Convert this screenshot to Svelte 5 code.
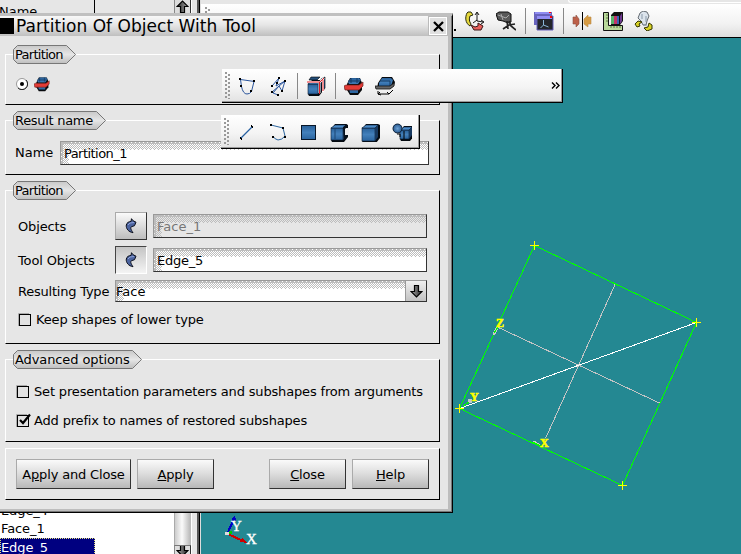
<script>
  const mainTools = ['rotate', 'zoomTool', '|', 'windows', '|', 'mirror', 'ruler', 'light'];
  const opTools = ['polygon', 'sketch', '|', 'explode', '|', 'partition', 'archimede'];
  const buildTools = ['edge', 'wire', 'face', 'shell', 'solid', 'compound'];
  let addPrefix = $state(true);
  let setParams = $state(false);
  let keepShapes = $state(false);

  // [row, gray columns] of a 4 px wide fading dither
  const dither = [
    [0, [0, 1, 3]], [1, [0, 1, 2, 3]], [2, [0, 2]], [3, [1, 3]],
    [4, [0, 2]], [5, [1, 3]], [6, [0, 2]], [7, [1]]
  ];
</script>

<svelte:head><title>Partition Of Object With Tool</title></svelte:head>

{#snippet cube(x, y, s)}
  <path d="M{x + 1} {y + 4}l3-4h{s - 3}l2 1v{s - 2}l-4 5h-{s - 2}l-1-2z" fill="#050a10" />
  <rect {x} y={y + 4} width={s - 2} height={s - 2} fill="url(#face)" stroke="#0c1d33" stroke-width=".6" />
  <path d="M{x} {y + 4}l4-3h{s - 3}l-3 3z" fill="#4b8bc9" stroke="#0c1d33" stroke-width=".6" />
  <path d="M{x + s - 2} {y + 4}l3-3v{s - 3}l-3 4z" fill="#173960" />
{/snippet}

{#snippet icon(name)}
  <svg class="icon" viewBox="0 0 20 20">
    {#if name === 'polygon'}
      <path d="M3.5 3.5L17.500 5.500M3.500 3.500L4.500 10.500Q6 18 10 18Q13 18 14.500 15.500L17 5.500" fill="none" stroke="#2b559c" />
      <path d="M2 2h2v2H2zM16 4h2v2h-2zM3 9h2v2H3zM13 14h2v2h-2z" />
    {:else if name === 'sketch'}
      <path d="M4 10L11 2L8 10L17 5L14 15L11 10L5 17L10 19M4 16L17 5" fill="none" stroke="#2b559c" />
      <path d="M3 9h2v2H3zM10 1h2v2h-2zM8 6h2v2H8zM16 4h2v2h-2zM13 14h2v2h-2zM3 15h2v2H3zM9 18h2v2H9z" />
    {:else if name === 'explode'}
      {@render cube(2, 4, 12)}
      <path d="M5 1h9l-3 3H3zM15 3l4-2v11l-3 4z" fill="#234f7b" stroke="#000" stroke-width=".6" />
      <path d="M1 6h13M14 6l4-4M13.500 6v11M17 4v12" stroke="#fff" stroke-width="2" />
      <path d="M1 6h13l4-4M13.500 6v12M17 4v11" fill="none" stroke="#e21f26" />
    {:else if name === 'partition'}
      <path d="M3 8l3-6h10l2 5v7l-4 5H6l-3-5z" fill="#080a0d" />
      <path d="M4 6l3-4h8l2 2-3 4H5zM5 12h9v5H6z" fill="url(#face)" />
      <path d="M4 5h12M7 2v5M13 2v5" stroke="#153b65" />
      <path d="M0 10l2-1h13l4-3v4l-4 4H1z" fill="#e33b36" stroke="#65211f" stroke-width=".7" />
    {:else if name === 'archimede'}
      <path d="M3 7l4-6h10l3 5-1 4-4 3H2z" fill="#080a0d" />
      <path d="M4 7l3-5h9l2 2-2 6H4z" fill="url(#face)" />
      <path d="M5 5h10M15 5v5" stroke="#173c65" />
      <path d="M0 10h15l4-3v3l-4 3H1z" fill="#666" stroke="#151515" stroke-width=".8" />
      <path d="M3 15v3h11l4-4M3 18l2-2M3 18l3 1M14 18l-2-2" fill="none" stroke="#000" />
    {:else if name === 'edge'}
      <path d="M4 16L15 5" stroke="#2760a0" stroke-width="1.300" /><path d="M3 15h1v1h1v2H4v-1H3zM14 3h1v1h1v2h-1V5h-1z" />
    {:else if name === 'wire'}
      <path d="M3 3L15 6L17 14Q14 18 10 18Q6 17 5 14" fill="none" stroke="#2b659e" />
      <path d="M2 2h2v2H2zM14 5h2v2h-2zM16 14h2v2h-2zM4 14h2v2H4z" />
    {:else if name === 'face'}
      <rect x="2.500" y="3.500" width="14" height="14" fill="url(#face)" stroke="#081627" />
    {:else if name === 'shell'}
      {@render cube(1, 2, 14)}
      <path d="M14 6h5v7h-5z" fill="#efefef" /><path d="M13 5l4-3v3l-2 2v6l3 1-4 5z" fill="#06101c" /><path d="M5 7v10" stroke="#1c4673" />
    {:else if name === 'solid'}
      {@render cube(1, 2, 15)}
    {:else if name === 'compound'}
      {@render cube(8, 4, 11)}
      <circle cx="5.500" cy="6.500" r="4.500" fill="url(#ball)" stroke="#0a1e35" />
      <path d="M5 12h3v3M12 9v8" stroke="#000" fill="none" />
    {:else if name === 'rotate'}
      <path d="M5 15C0 12 0 6 2 2L3 1h3l2 3-3 1c-1 3-1 5 1 8z" fill="#e5d83e" stroke="#282b0c" />
      <path d="M6 14l4 2 3-1V12l5 3-2 4H9z" fill="#e8605c" stroke="#3a1717" />
      <path d="M12 2v8l6 1M12 9l-4 3M10 4l2-3 2 3M16 9l3 2-3 2" fill="none" stroke="#000" stroke-width=".9" />
    {:else if name === 'zoomTool'}
      <path d="M0 3l3-2h9l3 2v8l-3 1-5-2-5-1z" fill="#595959" stroke="#111" />
      <path d="M2 4l8 3 3-3M5 3l2 6" stroke="#aaa" fill="none" />
      <path d="M11 10l1 8M13 10l2 5 5 4M7 18l6-4 6-1" stroke="#222" fill="none" stroke-width="1.700" />
    {:else if name === 'windows'}
      <path d="M0 1h18v13H0z" fill="#6863bd" /><path d="M1 1h16v2H1z" fill="#8f8cf1" />
      <path d="M3 5h16v14H3z" fill="#24262b" stroke="#6561bc" /><path d="M3 5h15v3H3z" fill="#928df4" />
      <path d="M15 1h2v1h-2zM16 5h2v2h-2z" fill="#f00" />
      <path d="M9.500 9v5l5 2M9.500 14l-3 3" stroke="#8ab7d8" fill="none" />
    {:else if name === 'mirror'}
      <path d="M10.500 1v18" stroke="#000" /><path d="M1 6h3V4l3 4v5l-3 3v-3H1z" fill="#bd6049" stroke="#895344" stroke-width=".6" />
      <path d="M19 6h-3V4l-4 4v5l4 3v-3h3z" fill="#d69b43" stroke="#b88a46" stroke-width=".6" />
    {:else if name === 'ruler'}
      <path d="M.5 1.500h5v13h14v5H.5z" fill="#b9d99b" stroke="#111" />
      <path d="M3 4h2M3 7h2M3 10h2M8 15v2M11 15v2M14 15v2M17 15v2" stroke="#5e7a43" />
      <path d="M8 4l3-3h9v9l-3 4H8z" fill="#111" /><path d="M8 5h3v8H8z" fill="#58b46b" /><path d="M11 5h3v8h-3z" fill="#c43468" /><path d="M14 5h2v8h-2z" fill="#3a63b5" /><path d="M17 5l2-3v8l-2 3z" fill="#703b90" />
    {:else if name === 'light'}
      <path d="M6 2l3-2 4 1 2 4-2 5-1 4H9L7 10 4 7z" fill="#dce4ec" stroke="#424a52" stroke-width=".8" />
      <path d="M8 3v5M12 5v6M9 14h4" stroke="#8999a9" />
      <path d="M1 13l3-3 4 1-3 2 1 2-3 1zM10 17l4-1 1-4 3 2v4l-5 2z" fill="#d8d126" stroke="#333600" />
    {/if}
  </svg>
{/snippet}

{#snippet tools(list)}
  {#each list as t}
    {#if t === '|'}<span class="sep"></span>{:else}<span class="slot">{@render icon(t)}</span>{/if}
  {/each}
{/snippet}

{#snippet grip()}
  <svg class="grip" width="6" height="27" viewBox="0 0 6 27"><rect width="6" height="27" fill="url(#gripdots)" /></svg>
{/snippet}

{#snippet legend(text, w, track)}
  <div class="legend" style:width="{w}px" style:letter-spacing="{track}px">
    <svg width={w} height="19" viewBox="0 0 {w} 19">
      <path d="M.5 4.500L4.500.500H{w - 9.5}L{w - 0.5} 9.500L{w - 9.5} 18.500H4.500L.5 14.500Z" fill="url(#plate)" stroke="#777" />
    </svg>
    <span>{text}</span>
  </div>
{/snippet}

{#snippet shade()}
  <svg class="shade" width="100%" height="100%" shape-rendering="crispEdges">
    <rect width="100%" height="8" fill="url(#dither)" />
    <g transform="matrix(0 1 1 0 0 0)"><rect width="24" height="8" fill="url(#dither)" /></g>
  </svg>
{/snippet}

{#snippet pick(down)}
  <button class="pick" class:down aria-label="Select">
    <svg width="12" height="16" viewBox="0 0 12 16">
      <path d="M6.500 .7l1.500 2 3 1.500-1.500 3.500-3 1c-1.500 1-.500 3 1.500 6C3.500 14 .8 10.500 1.300 7c.5-2.500 2.700-3.500 4.700-3.500z" fill="#4b639f" stroke="#090d18" />
      <path d="M3 7l2-2 4-.5" fill="none" stroke="#8fa2d8" />
    </svg>
  </button>
{/snippet}

{#snippet arrow(flip)}
  <svg class:flip width="13" height="13" viewBox="0 0 13 13"><path d="M4.500.5h4v6h3.500L6.500 12L1 6.500h3.500z" fill="url(#arr)" stroke="#000" stroke-width="1.200" /></svg>
{/snippet}

{#snippet box(on)}
  <svg class="box" width="16" height="15" viewBox="0 0 16 15">
    <path d="M.5 14V1.500H11" fill="none" stroke="#aaa" /><rect x="1.500" y="2.500" width="11" height="11" fill="#e2e2e2" stroke="#000" />
    {#if on}<path d="M4 7l3 3L14 1.500" fill="none" stroke="#000" stroke-width="2.200" />{/if}
  </svg>
{/snippet}

<svg class="defs" width="0" height="0">
  <defs>
    <linearGradient id="face" x1="0" y1="0" x2="0" y2="1"><stop stop-color="#286099" /><stop offset=".5" stop-color="#4380bb" /><stop offset="1" stop-color="#2a649f" /></linearGradient>
    <radialGradient id="ball"><stop stop-color="#6aa0d4" /><stop offset="1" stop-color="#2a5a90" /></radialGradient>
    <linearGradient id="plate" x1="0" y1="0" x2="0" y2="1"><stop stop-color="#c8c8c8" /><stop offset=".5" stop-color="#e6e6e6" /><stop offset="1" stop-color="#bebebe" /></linearGradient>
    <linearGradient id="arr" x1="0" x2="1"><stop stop-color="#aaa" /><stop offset="1" stop-color="#222" /></linearGradient>
    <pattern id="dither" width="4" height="8" patternUnits="userSpaceOnUse">
      {#each dither as [y, cols]}{#each cols as x}<rect {x} {y} width="1" height="1" fill="#bcbcbc" />{/each}{/each}
    </pattern>
    <pattern id="gripdots" width="6" height="4" patternUnits="userSpaceOnUse"><path d="M0 0h2v2H0zM3 2h2v2H3z" fill="#999" /></pattern>
  </defs>
</svg>

<main>
  <aside>
    <div class="tree">
      <div class="head"><span>Name</span></div>
      <div class="items"><p>Edge_4</p><p>Face_1</p><p class="sel">Edge_5</p></div>
    </div>
    <div class="scroll"><span class="sb">{@render arrow(true)}</span><span class="sb low">{@render arrow(false)}</span></div>
    <div class="split"></div>
  </aside>
  <section class="work">
    <div class="strip"><i></i></div>
    <div class="maintools">{@render grip()}<svg class="cut" width="4" height="22" viewBox="0 0 4 22"><path d="M0 3h1v10H0zM2 19h2v2H2z" /></svg>{@render tools(mainTools)}</div>
    <svg class="scene" width="540" height="516" viewBox="201 38 540 516" shape-rendering="crispEdges">
      <g fill="none">
        <path d="M615.500 283.500L545.500 438.500M498.500 327.500L660.500 403.500" stroke="#c4c4c4" />
        <path d="M459.500 408.500L534.500 245.500L696.500 322.500L622.500 485.500Z" stroke="#0f0" />
        <path d="M459.500 408.500L696.500 322.500" stroke="#fff" />
        <path d="M530 245.500h9M534.500 241v9M692 322.500h9M696.500 318v9M618 485.500h9M622.500 481v9M455 408.500h9M459.500 404v9" stroke="#ff0" />
      </g>
      <path d="M493 333l3-6 2 2-3 6h-2zM468 399h4v4h-4zM532 441h3l6 4h-3z" fill="#c8c8c8" />
      <path d="M494 333l4-6M463 406l6-4M533 442l8 4" stroke="#0f0" />
      <g class="axis"><text x="496" y="327">Z</text><text x="470" y="401">Y</text><text x="540" y="447">X</text></g>
      <path d="M227.500 533L234 519" stroke="#0000c8" stroke-width="2" /><path d="M235 515l1 6-5-2z" fill="#0000c8" />
      <path d="M228 534l15 7" stroke="#d00000" stroke-width="2" /><path d="M247 543l-7-1 2-4z" fill="#c00" />
      <path d="M229 531h3v3h-3z" fill="#0c0" /><path d="M225 532h4v3h-4z" fill="#ddd" />
      <g class="triad"><text x="231" y="531">Y</text><text x="246" y="544">X</text></g>
    </svg>
  </section>
</main>

<div class="dialog">
  <header><b class="sys"></b><h1>Partition Of Object With Tool</h1>
    <button class="x" aria-label="Close window"><svg width="11" height="11" viewBox="0 0 11 11"><path d="M1 1l9 9M10 1l-9 9" stroke="#000" stroke-width="2.300" /></svg></button>
  </header>
  <div class="body">
    <div class="group g1">{@render legend('Partition', 63, -0.7)}
      <div class="radio"><svg width="12" height="12" viewBox="0 0 12 12"><circle cx="6" cy="6" r="5.500" fill="#fff" stroke="#999" /><path d="M10 2a5.500 5.500 0 0 1-8 8" fill="none" stroke="#222" /><circle cx="6" cy="6" r="2" /></svg><span class="small">{@render icon('partition')}</span></div>
    </div>
    <div class="group g2">{@render legend('Result name', 93, -0.3)}
      <div class="name"><label for="n">Name</label><div class="field" id="n">{@render shade()}<span class="t1">Partition_1</span></div></div>
    </div>
    <div class="group g3">{@render legend('Partition', 63, -0.7)}
      <div class="row r1"><span class="lab">Objects</span>{@render pick(false)}<div class="field off">{@render shade()}<span>Face_1</span></div></div>
      <div class="row r2"><span class="lab">Tool Objects</span>{@render pick(true)}<div class="field">{@render shade()}<span class="t2">Edge_5</span></div></div>
      <div class="row r3"><span class="lab type">Resulting Type</span><div class="field combo">{@render shade()}<span>Face</span><i class="drop">{@render arrow(false)}</i></div></div>
      <button class="check c1" onclick={() => (keepShapes = !keepShapes)}>{@render box(keepShapes)}<span>Keep shapes of lower type</span></button>
    </div>
    <div class="group g4">{@render legend('Advanced options', 129, -0.1)}
      <button class="check c2" onclick={() => (setParams = !setParams)}>{@render box(setParams)}<span>Set presentation parameters and subshapes from arguments</span></button>
      <button class="check c3" onclick={() => (addPrefix = !addPrefix)}>{@render box(addPrefix)}<span>Add prefix to names of restored subshapes</span></button>
    </div>
    <div class="group g5">
      <button class="btn wide">A<u>p</u>ply and Close</button><button class="btn"><u>A</u>pply</button><em></em><button class="btn"><u>C</u>lose</button><button class="btn"><u>H</u>elp</button>
    </div>
  </div>
</div>

<div class="float ops">{@render grip()}{@render tools(opTools)}<svg class="more" width="9" height="7" viewBox="0 0 9 7"><path d="M1 .5l3 3-3 3M5 .5l3 3-3 3" fill="none" stroke="#000" stroke-width="1.400" /></svg></div>
<div class="float build">{@render grip()}{@render tools(buildTools)}</div>

<style>
  :global(body) { margin: 0; overflow: hidden; }
  * { box-sizing: border-box; }
  .defs { position: absolute; }
  main, .dialog, .float { font: 13px/16px "DejaVu Sans", sans-serif; color: #000; }
  button { font: inherit; color: inherit; padding: 0; margin: 0; border: 0; background: none; }
  svg { display: block; flex: none; }
  main { display: flex; width: 741px; height: 554px; background: #e6e6e6; }
  aside { display: flex; width: 201px; background: #fff; }
  .tree { width: 174px; display: flex; flex-direction: column; justify-content: space-between; overflow: hidden; background: linear-gradient(#e6e6e6 13px, #fff 13px); }
  .head { width: 95px; height: 13px; border-right: 1px solid #000; }
  .head span { display: block; padding-top: 4px; margin-left: -1px; }
  .items { height: 50px; }
  .items p { margin: 0; height: 18px; line-height: 18px; padding-left: 1px; letter-spacing: -.1px; }
  .items p:first-child { margin-top: -2px; }
  .items .sel { width: 95px; height: 19px; background: #000080; color: #fff; outline: 1px dotted #e5e07d; outline-offset: -1px; line-height: 20px; }
  .scroll { width: 17px; display: flex; flex-direction: column; justify-content: space-between; background: linear-gradient(90deg, #aaa 1px, #ccc 1px, #fafafa 8px, #bbb 16px); }
  .sb { height: 13px; display: flex; justify-content: center; background: #ddd; border-right: 1px solid #333; border-left: 1px solid #888; overflow: hidden; }
  .low { height: 9px; border-top: 1px solid #777; padding-top: 2px; }
  .low svg { margin-top: -4px; }
  .flip { transform: rotate(180deg); }
  .split { width: 10px; background: linear-gradient(90deg, #fff 1px, #e6e6e6 1px, #e6e6e6 6px, #555 6px, #555 8px, #000 8px, #000 9px, #ddd 9px); }
  .work { width: 540px; }
  .strip { height: 4px; display: flex; justify-content: flex-end; background: #e6e6e6; }
  .strip i { width: 173px; height: 3px; border-bottom: 1px solid #fff; border-left: 1px solid #fff; border-radius: 0 0 0 3px; }
  .maintools { height: 34px; display: flex; align-items: center; padding-left: 4px; border-bottom: 1px solid #000; background: linear-gradient(#fff, #f2f2f2 60%, #dedede); }
  .cut { margin-left: 241px; margin-right: 3px; }
  .maintools .grip { margin-right: 0; }
  .scene { background: #248892; }
  .axis { font: bold 12px "Liberation Serif", serif; fill: #ff0; stroke: #ff0; stroke-width: .6px; }
  .triad { font: 15px "Liberation Serif", serif; fill: #fff; stroke: #fff; stroke-width: .3px; }
  .slot { width: 31px; display: flex; justify-content: center; flex: none; }
  .icon { width: 20px; height: 20px; }
  .sep { width: 1px; height: 26px; margin: 0 2px 0 4px; background: #888; flex: none; }
  .grip { margin-right: 1px; }
  .ops .grip { margin-right: 0; }

  .dialog { position: absolute; left: 0; top: 13px; width: 453px; height: 500px; display: flex; flex-direction: column; background: #e6e6e6; border-top: 3px solid #c0c0c0; border-right: 1px solid #000; border-bottom: 1px solid #000; box-shadow: inset -1px -1px #777, inset -4px -3px #bdbdbd; }
  header { height: 20px; margin-right: 4px; display: flex; align-items: center; background: linear-gradient(#f8f8f8, #e6e6e6 45%, #bfbfbf); }
  .sys { width: 14px; height: 16px; background: #000; }
  h1 { flex: 1; margin: 0 0 0 2px; font: 17px/20px "DejaVu Sans", sans-serif; letter-spacing: .04px; white-space: nowrap; }
  .x { width: 18px; height: 18px; display: flex; align-items: center; justify-content: center; border: 1px solid #fff; outline: 1px solid #bbb; background: #e0e0e0; margin-right: 1px; }
  .body { padding: 18px 0 0 5px; display: flex; flex-direction: column; }
  .group { width: 435px; border: 1px solid #000; border-top-color: #fff; border-left-color: #fff; }
  .g1 { height: 51px; margin-bottom: 15px; }
  .g2 { height: 55px; margin-bottom: 15px; }
  .g3 { height: 154px; margin-bottom: 15px; }
  .g4 { height: 83px; margin-bottom: 6px; }
  .g5 { height: 52px; display: flex; gap: 6px; padding: 10px 10px 0; letter-spacing: -.16px; }
  .g5 em { flex: 1; }
  .legend { display: grid; height: 19px; margin: -10px 0 0 7px; white-space: nowrap; }
  .legend svg, .legend span { grid-area: 1 / 1; }
  .legend span { padding-left: 2px; line-height: 19px; }
  .radio { display: flex; align-items: center; gap: 6px; padding: 12px 0 0 10px; }
  .small .icon { width: 16px; height: 16px; }
  .name { display: flex; align-items: center; padding: 10px 10px 0 9px; }
  .name label { width: 45px; line-height: 24px; padding-top: 1px; }
  .t1 { letter-spacing: -.55px; }
  .t2 { letter-spacing: -.25px; }
  .row { display: flex; align-items: center; padding-left: 12px; }
  .lab { width: 97px; white-space: nowrap; letter-spacing: -.15px; padding-top: 2px; }
  .type { letter-spacing: -.22px; }
  .r1 { margin-top: 11px; height: 29px; }
  .r2 { margin-top: 5px; height: 29px; }
  .r3 { margin-top: 6px; height: 22px; }
  .field { flex: 1; display: grid; height: 24px; background: #fff; border: 1px solid #333; border-top-color: #999; border-left-color: #999; }
  .row .field { margin-right: 12px; }
  .field > span, .shade { grid-area: 1 / 1; min-width: 0; min-height: 0; }
  .field > span { padding-left: 3px; line-height: 23px; }
  .shade { height: 22px; overflow: hidden; }
  .off { background: #e6e6e6; color: #777; }
  .row .combo { height: 22px; }
  .combo .shade { height: 20px; }
  .combo > span { padding-left: 0; line-height: 21px; }
  .drop { grid-area: 1 / 1; justify-self: end; width: 21px; height: 20px; display: flex; align-items: center; justify-content: center; border-left: 1px solid #999; background: linear-gradient(#f0f0f0, #c2c2c2); }
  .pick { width: 32px; height: 28px; margin-right: 6px; display: flex; align-items: center; justify-content: center; border: 1px solid #333; border-top-color: #aaa; border-left-color: #aaa; background: linear-gradient(#fafafa, #bdbdbd); }
  .down { border-color: #444 #fff #fff #444; background: linear-gradient(#c4c4c4, #f4f4f4); }
  .check { display: flex; align-items: center; height: 16px; text-align: left; white-space: nowrap; }
  .check span { padding-top: 2px; }
  .box { margin-right: 2px; }
  .c1 { margin: 9px 0 0 12px; letter-spacing: -.2px; }
  .c2 { margin: 14px 0 0 10px; letter-spacing: -.165px; }
  .c3 { margin: 13px 0 0 10px; letter-spacing: -.13px; }
  .btn { width: 77px; height: 30px; padding-top: 1px; letter-spacing: inherit; border: 1px solid #333; border-top-color: #aaa; border-left-color: #aaa; background: linear-gradient(#fafafa, #dcdcdc 50%, #b8b8b8); white-space: nowrap; }
  .check { letter-spacing: -.165px; }
  .wide { width: 115px; }

  .float { position: absolute; display: flex; align-items: center; padding-left: 3px; background: linear-gradient(#fff, #f4f4f4 55%, #e2e2e2); border-right: 1px solid #000; border-bottom: 1px solid #000; box-shadow: inset -1px -1px #999; }
  .ops { left: 222px; top: 69px; width: 341px; height: 34px; }
  .build { left: 221px; top: 115px; width: 199px; height: 34px; }
  .more { margin-left: auto; margin-right: 2px; }
</style>
